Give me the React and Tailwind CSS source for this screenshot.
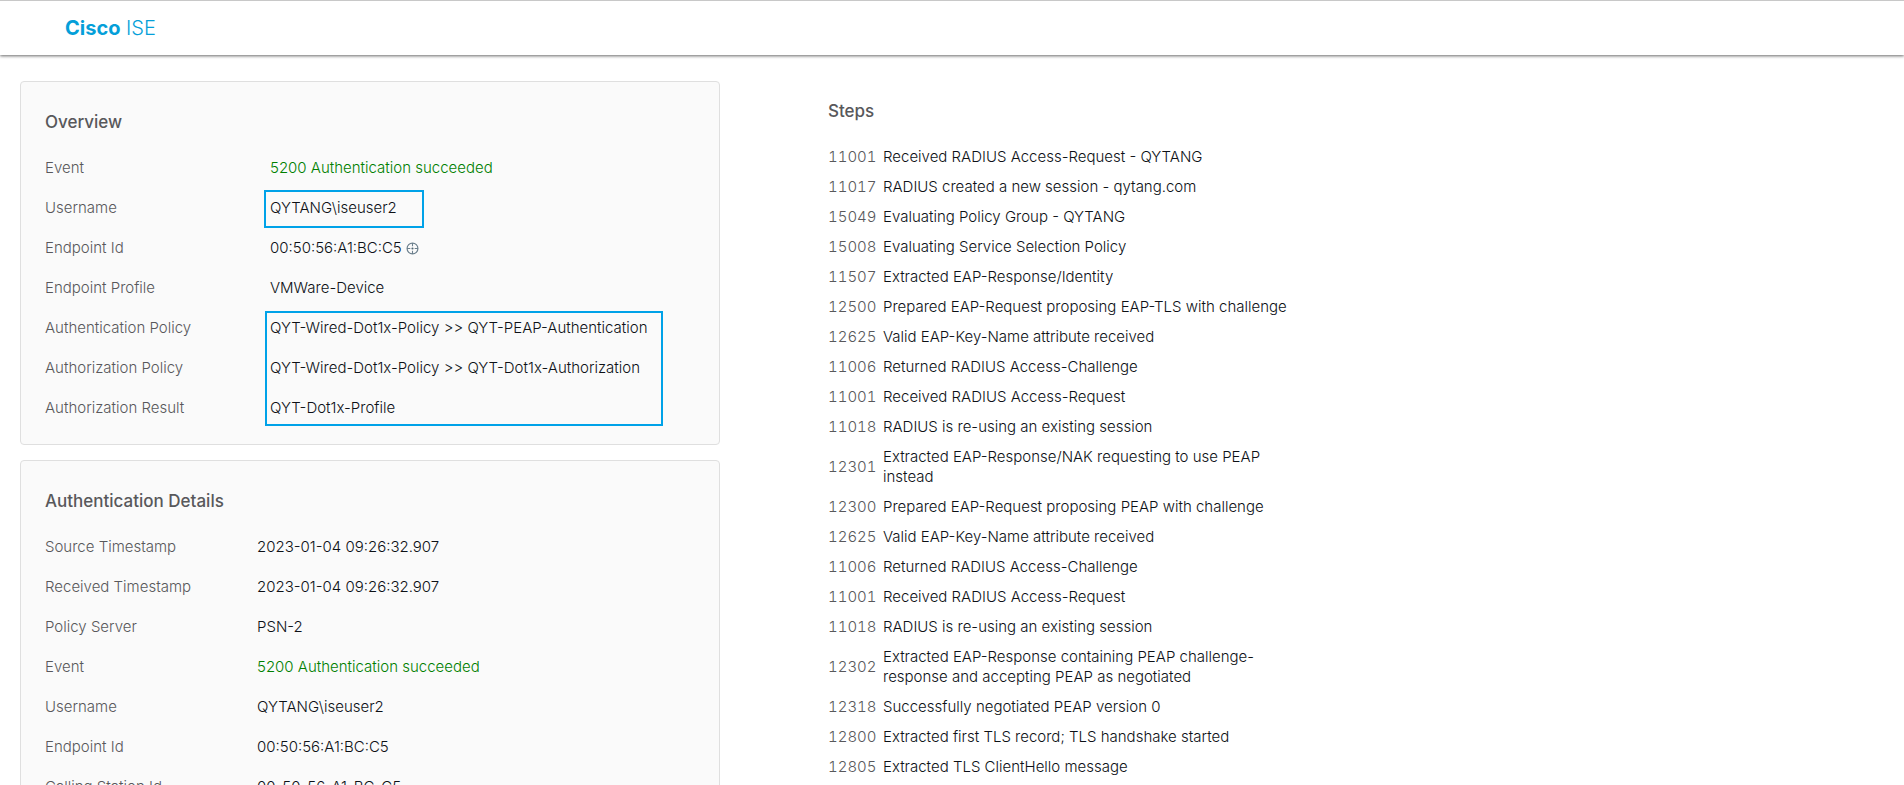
const overview = [
  { label: 'Event', value: '5200 Authentication succeeded', success: true },
  { label: 'Username', value: 'QYTANG\\iseuser2', outlined: true },
  { label: 'Endpoint Id', value: '00:50:56:A1:BC:C5', locate: true },
  { label: 'Endpoint Profile', value: 'VMWare-Device' },
  { label: 'Authentication Policy', value: 'QYT-Wired-Dot1x-Policy >> QYT-PEAP-Authentication', groupStart: true },
  { label: 'Authorization Policy', value: 'QYT-Wired-Dot1x-Policy >> QYT-Dot1x-Authorization' },
  { label: 'Authorization Result', value: 'QYT-Dot1x-Profile' },
];

const details = [
  { label: 'Source Timestamp', value: '2023-01-04 09:26:32.907' },
  { label: 'Received Timestamp', value: '2023-01-04 09:26:32.907' },
  { label: 'Policy Server', value: 'PSN-2' },
  { label: 'Event', value: '5200 Authentication succeeded', success: true },
  { label: 'Username', value: 'QYTANG\\iseuser2' },
  { label: 'Endpoint Id', value: '00:50:56:A1:BC:C5' },
  { label: 'Calling Station Id', value: '00-50-56-A1-BC-C5' },
];

const steps = [
  ['11001', 'Received RADIUS Access-Request - QYTANG'],
  ['11017', 'RADIUS created a new session - qytang.com'],
  ['15049', 'Evaluating Policy Group - QYTANG'],
  ['15008', 'Evaluating Service Selection Policy'],
  ['11507', 'Extracted EAP-Response/Identity'],
  ['12500', 'Prepared EAP-Request proposing EAP-TLS with challenge'],
  ['12625', 'Valid EAP-Key-Name attribute received'],
  ['11006', 'Returned RADIUS Access-Challenge'],
  ['11001', 'Received RADIUS Access-Request'],
  ['11018', 'RADIUS is re-using an existing session'],
  ['12301', 'Extracted EAP-Response/NAK requesting to use PEAP instead'],
  ['12300', 'Prepared EAP-Request proposing PEAP with challenge'],
  ['12625', 'Valid EAP-Key-Name attribute received'],
  ['11006', 'Returned RADIUS Access-Challenge'],
  ['11001', 'Received RADIUS Access-Request'],
  ['11018', 'RADIUS is re-using an existing session'],
  ['12302', 'Extracted EAP-Response containing PEAP challenge-response and accepting PEAP as negotiated'],
  ['12318', 'Successfully negotiated PEAP version 0'],
  ['12800', 'Extracted first TLS record; TLS handshake started'],
  ['12805', 'Extracted TLS ClientHello message'],
];

function LocateIcon() {
  return (
    <svg viewBox="0 0 12 12" className="size-[13px]" fill="none" stroke="#6b7f8c" aria-hidden="true">
      <circle cx="6" cy="6" r="5" strokeWidth="1.1" />
      <path d="M6 1v3M6 8v3M1 6h3M8 6h3" strokeWidth="1" />
      <circle cx="6" cy="6" r="1" fill="#4f6470" stroke="none" />
    </svg>
  );
}

function Card({ title, rows, labelClass }) {
  return (
    <section className="rounded-[4px] border border-[#dfdfdf] bg-[#fafafa] px-6 pt-5 pb-4">
      <h2 className="mb-1.5 text-[17px] leading-10 font-medium text-[#58585b]">{title}</h2>
      <table className="w-full border-collapse">
        <tbody>
          {rows.map((row) => (
            <tr key={row.label} className="h-10">
              <th scope="row" className={`${labelClass} p-0 text-left font-light whitespace-nowrap text-[#58585b]`}>
                {row.label}
              </th>
              <td className={`relative p-0 whitespace-nowrap ${row.success ? 'text-[#008000]' : 'text-[#0d1116]'}`}>
                {row.outlined && (
                  <span className="pointer-events-none absolute top-0.5 -left-1.5 h-[38px] w-40 border-2 border-[#00a2e8]" />
                )}
                {row.groupStart && (
                  <span className="pointer-events-none absolute top-[3px] -left-[5px] h-[115px] w-[398px] border-2 border-[#00a2e8]" />
                )}
                <span className="flex items-center gap-1">
                  {row.value}
                  {row.locate && (
                    <button type="button" aria-label="Locate endpoint">
                      <LocateIcon />
                    </button>
                  )}
                </span>
              </td>
            </tr>
          ))}
        </tbody>
      </table>
    </section>
  );
}

export default function App() {
  return (
    <div className="h-screen overflow-hidden bg-white font-['Inter','Liberation_Sans',sans-serif] text-[15px] leading-5 font-light">
      <header className="flex h-[55px] items-center border-t border-[#c8c8c8] pl-[65px] shadow-[0_1px_3px_rgba(0,0,0,0.6)]">
        <h1 className="text-xl text-[#049fd9]">
          <b className="font-bold">Cisco</b> <span className="font-light">ISE</span>
        </h1>
      </header>
      <main className="grid grid-cols-[700fr_576fr_608fr] pt-[26px] pl-5">
        <div className="flex flex-col gap-[15px]">
          <Card title="Overview" rows={overview} labelClass="w-[225px]" />
          <Card title="Authentication Details" rows={details} labelClass="w-[212px]" />
        </div>
        <section className="pt-2.5 pl-[108px]">
          <h2 className="mb-[11px] text-[17px] leading-10 font-medium text-[#58585b]">Steps</h2>
          <table className="w-full border-collapse">
            <tbody>
              {steps.map(([code, text], i) => (
                <tr key={i}>
                  <th scope="row" className="w-[55px] px-0 py-[5px] text-left font-light text-[#58585b] tabular-nums">{code}</th>
                  <td className="px-0 py-[5px] text-[#0d1116]">{text}</td>
                </tr>
              ))}
            </tbody>
          </table>
        </section>
      </main>
    </div>
  );
}
